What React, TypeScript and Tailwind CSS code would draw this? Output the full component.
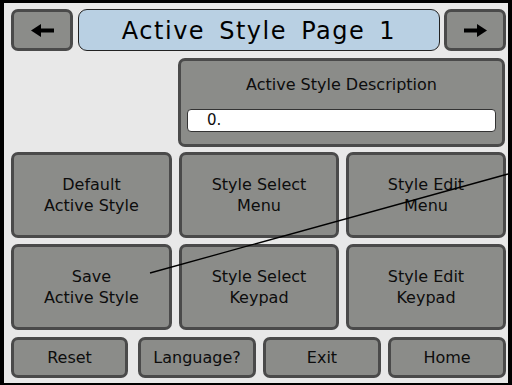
import type { ReactNode } from 'react';

const font = { fontFamily: '"DejaVu Sans", "Noto Sans CJK SC", sans-serif' };

function GrayButton({ className, children }: { className: string; children: ReactNode }) {
  return (
    <div
      className={`flex items-center justify-center rounded-[7px] border-[3px] border-[#4a4a4a] bg-[#8b8c89] text-center text-[16px] leading-[21px] text-[#0d0d0d] ${className}`}
    >
      {children}
    </div>
  );
}

function Arrow({ dir }: { dir: 'left' | 'right' }) {
  return (
    <svg width="23" height="13" viewBox="0 0 23 13" className={dir === 'right' ? 'rotate-180' : ''}>
      <polygon points="0,6.5 10,0 10,13" fill="#000" />
      <rect x="9" y="4.5" width="14" height="4" fill="#000" />
    </svg>
  );
}

export default function App() {
  return (
    <div className="h-[385px] w-[512px] bg-black pb-[2px] pl-[4px] pr-[4px] pt-[3px]" style={font}>
      <div className="relative flex h-full flex-col bg-[#e8e8e8] pl-[7px] pr-[2px] pt-[6px]">
        {/* header */}
        <div className="flex h-[42px] gap-[5px]">
          <GrayButton className="w-[62px]">
            <Arrow dir="left" />
          </GrayButton>
          <div className="flex w-[362px] items-center justify-center rounded-[9px] border border-[#222] bg-[#b9d0e3] pt-[1px] text-[24px] tracking-[1.5px] text-black [word-spacing:5px]">
            Active Style Page 1
          </div>
          <GrayButton className="ml-[-1px] w-[62px]">
            <Arrow dir="right" />
          </GrayButton>
        </div>

        {/* description */}
        <div className="mt-[7px] flex h-[89px]">
          <div className="w-[167px]" />
          <div className="flex w-[327px] flex-col rounded-[7px] border-[3px] border-[#4a4a4a] bg-[#8b8c89] px-[6px]">
            <div className="flex h-[48px] items-center justify-center text-[16px] text-[#0d0d0d]">
              Active Style Description
            </div>
            <div className="flex h-[23px] items-center rounded-[4px] border border-[#333] bg-white pl-[19px] text-[15px] text-[#0d0d0d]">
              0.
            </div>
          </div>
        </div>

        {/* main grid */}
        <div className="mt-[5px] grid grid-cols-[161px_160px_160px] grid-rows-[86px_86px] gap-x-[7px] gap-y-[6px]">
          <GrayButton className="">Default<br />Active Style</GrayButton>
          <GrayButton className="">Style Select<br />Menu</GrayButton>
          <GrayButton className="">Style Edit<br />Menu</GrayButton>
          <GrayButton className="">Save<br />Active Style</GrayButton>
          <GrayButton className="">Style Select<br />Keypad</GrayButton>
          <GrayButton className="">Style Edit<br />Keypad</GrayButton>
        </div>

        {/* bottom bar */}
        <div className="mt-[7px] flex h-[41px]">
          <GrayButton className="w-[117px]">Reset</GrayButton>
          <GrayButton className="ml-[10px] w-[118px]">Language?</GrayButton>
          <GrayButton className="ml-[7px] w-[118px]">Exit</GrayButton>
          <GrayButton className="ml-[7px] w-[118px]">Home</GrayButton>
        </div>

        {/* stray line drawn over the panel */}
        <svg className="pointer-events-none absolute left-[-4px] top-[-3px]" width="512" height="385">
          <line x1="150" y1="273" x2="508" y2="174" stroke="#000" strokeWidth="1.3" />
        </svg>
      </div>
    </div>
  );
}
